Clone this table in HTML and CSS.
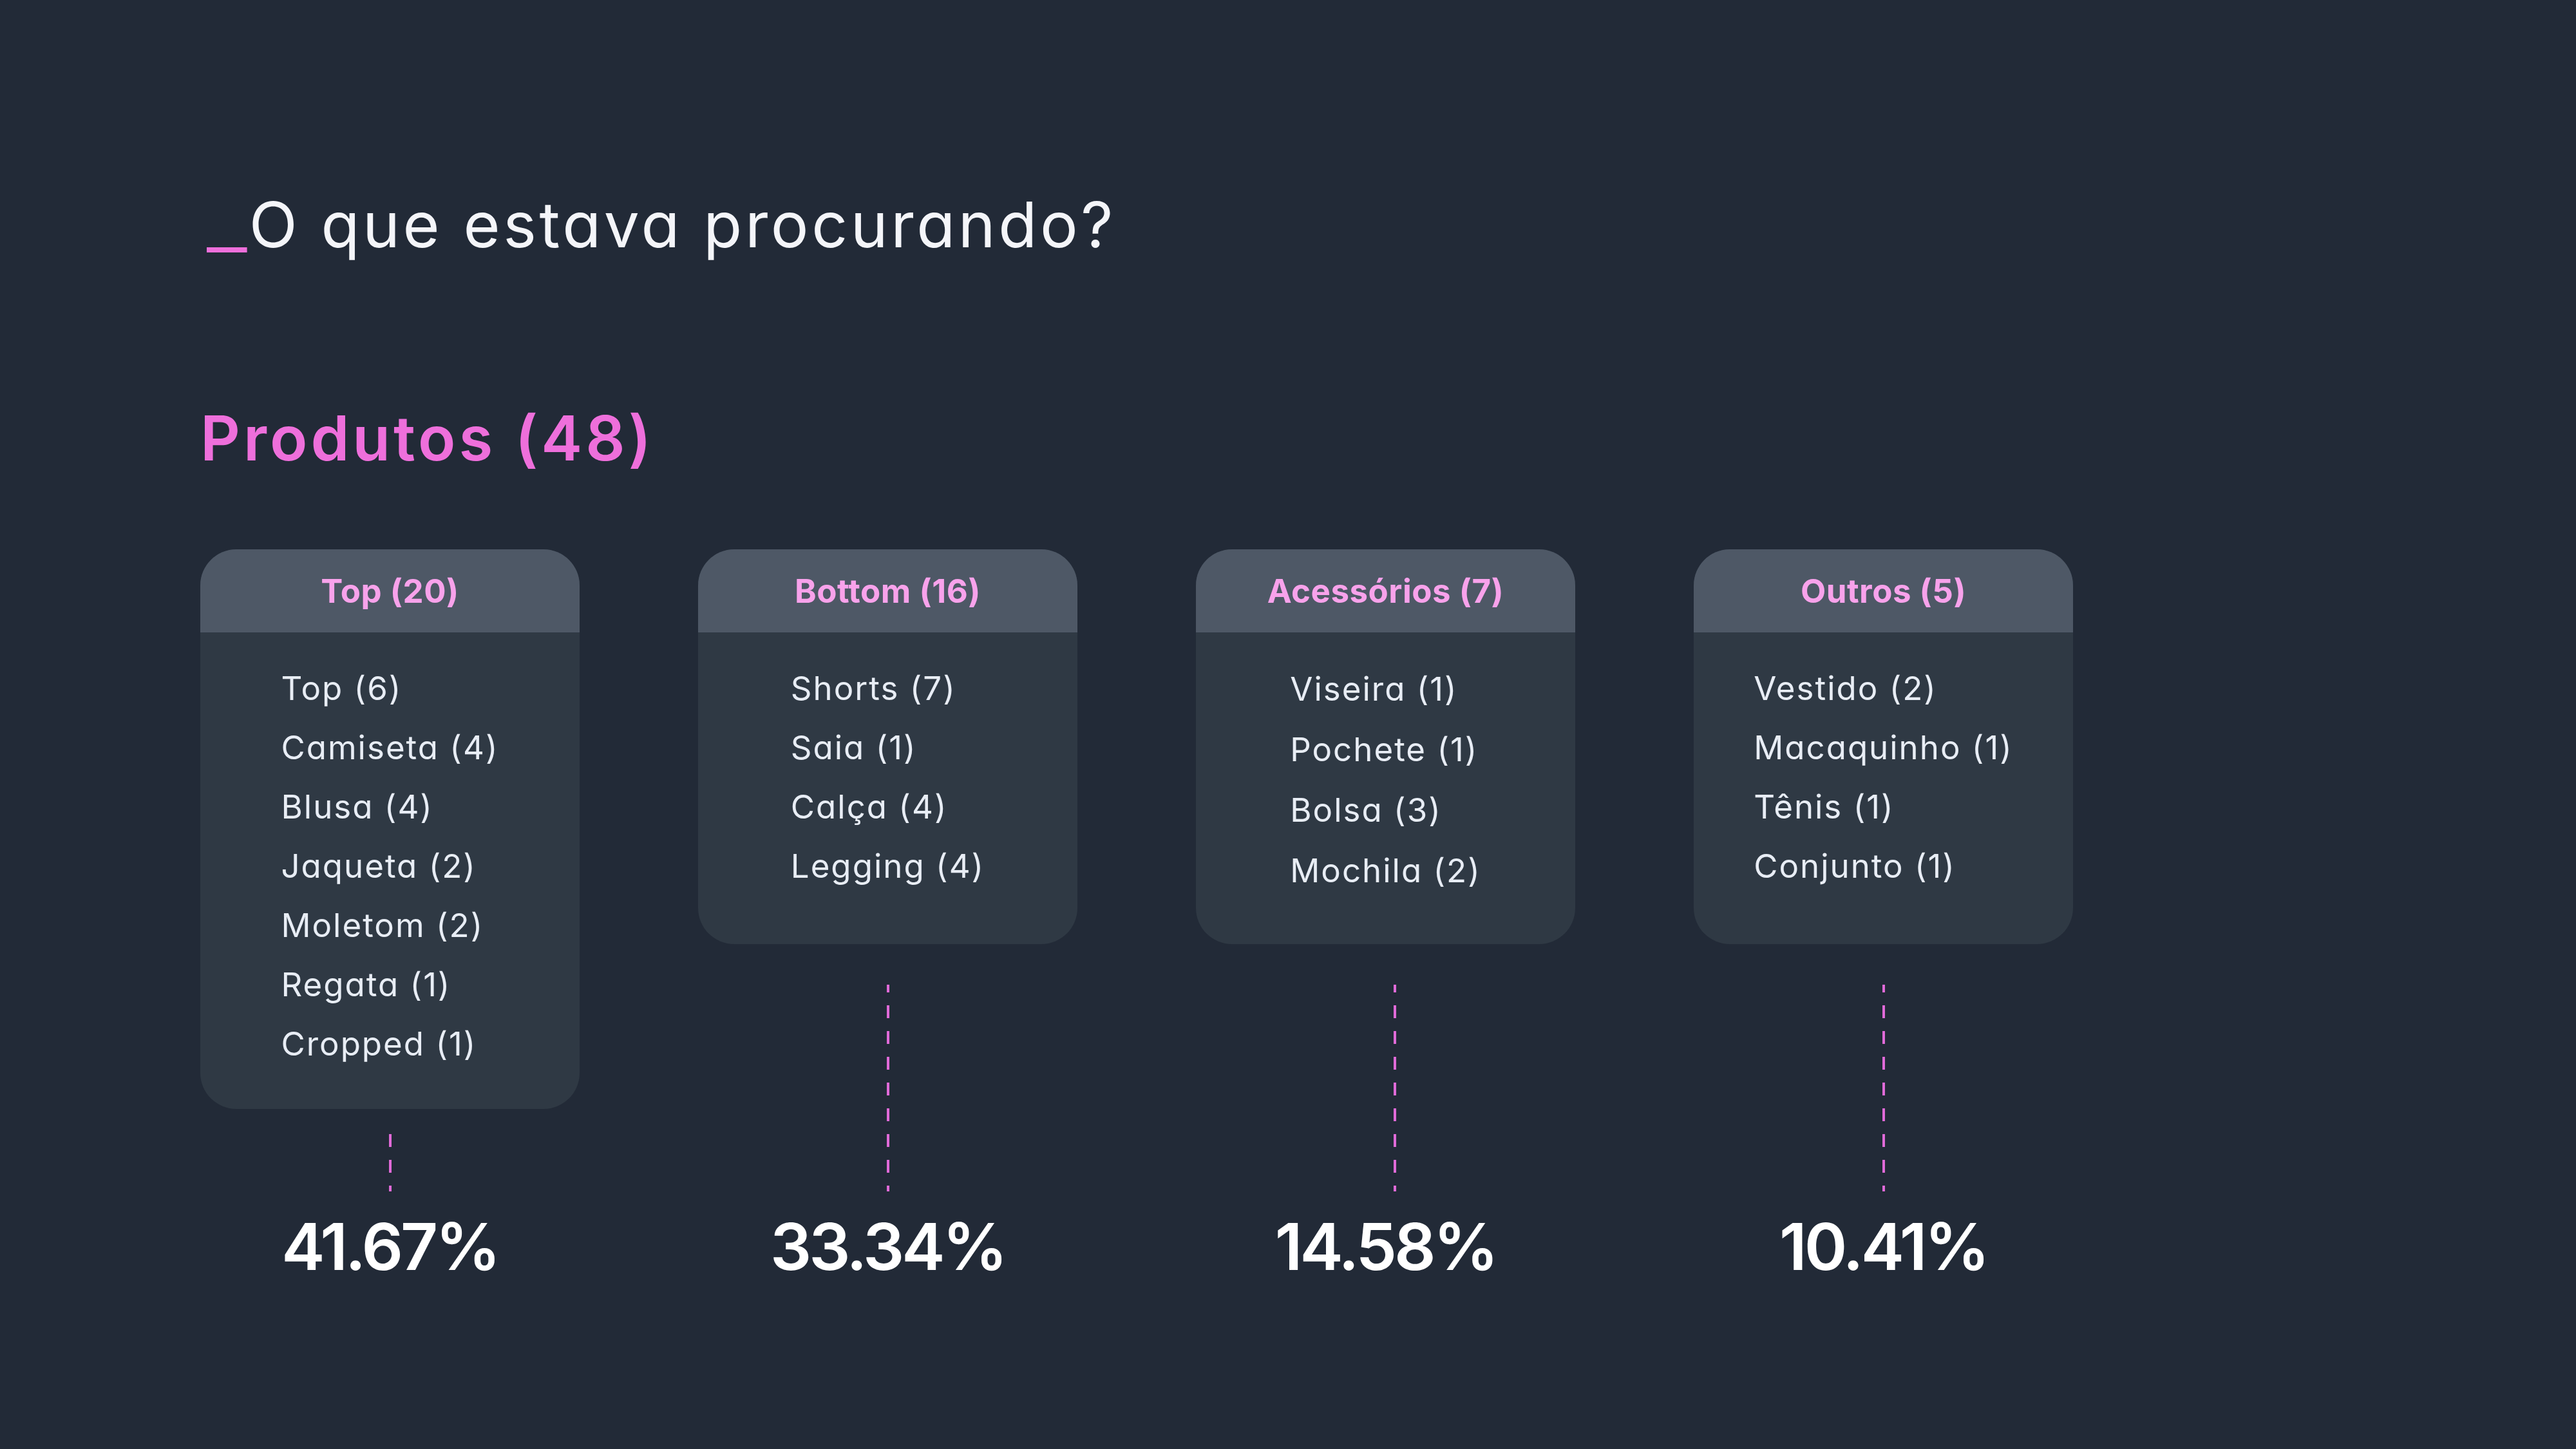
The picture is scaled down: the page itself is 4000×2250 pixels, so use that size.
FILE: index.html
```html
<!DOCTYPE html>
<html lang="pt-BR">
<head>
<meta charset="utf-8">
<title>O que estava procurando?</title>
<link rel="stylesheet" href="styles.css">
</head>
<body>
<main class="slide">
  <h1 class="title"><span class="title__mark">_</span>O que estava procurando?</h1>
  <h2 class="section">Produtos (48)</h2>
  <div class="categories">
    <section class="col col--tall">
      <div class="card">
        <h3 class="card__head">Top (20)</h3>
        <ul class="card__list">
          <li>Top (6)</li>
          <li>Camiseta (4)</li>
          <li>Blusa (4)</li>
          <li>Jaqueta (2)</li>
          <li>Moletom (2)</li>
          <li>Regata (1)</li>
          <li>Cropped (1)</li>
        </ul>
      </div>
      <div class="connector"></div>
      <p class="pct">41.67%</p>
    </section>
    <section class="col">
      <div class="card">
        <h3 class="card__head">Bottom (16)</h3>
        <ul class="card__list">
          <li>Shorts (7)</li>
          <li>Saia (1)</li>
          <li>Calça (4)</li>
          <li>Legging (4)</li>
        </ul>
      </div>
      <div class="connector"></div>
      <p class="pct">33.34%</p>
    </section>
    <section class="col">
      <div class="card">
        <h3 class="card__head">Acessórios (7)</h3>
        <ul class="card__list card__list--loose">
          <li>Viseira (1)</li>
          <li>Pochete (1)</li>
          <li>Bolsa (3)</li>
          <li>Mochila (2)</li>
        </ul>
      </div>
      <div class="connector connector--shifted"></div>
      <p class="pct">14.58%</p>
    </section>
    <section class="col">
      <div class="card">
        <h3 class="card__head">Outros (5)</h3>
        <ul class="card__list">
          <li>Vestido (2)</li>
          <li>Macaquinho (1)</li>
          <li>Tênis (1)</li>
          <li>Conjunto (1)</li>
        </ul>
      </div>
      <div class="connector"></div>
      <p class="pct">10.41%</p>
    </section>
  </div>
</main>
</body>
</html>
```

FILE: styles.css
```css
html, body {
  margin: 0;
  padding: 0;
  background: #222a37;
}

body {
  width: 4000px;
  height: 2250px;
  overflow: hidden;
  font-family: Inter, "Noto Sans", "DejaVu Sans", sans-serif;
  font-feature-settings: "cv11" 1;
}

.slide {
  box-sizing: border-box;
  height: 2250px;
  padding: 300px 0 0 311px;
}

.title {
  margin: 0;
  font-size: 98px;
  font-weight: 400;
  line-height: 1;
  letter-spacing: 4.6px;
  color: #f4f5f9;
  white-space: nowrap;
}

.title__mark {
  display: inline-block;
  margin-left: 10px;
  margin-right: 21px;
  color: #ee6fdb;
  letter-spacing: 0;
  transform: scaleX(1.4);
  transform-origin: left center;
}

.section {
  margin: 234px 0 0;
  font-size: 96px;
  font-weight: 600;
  line-height: 1;
  letter-spacing: 5px;
  color: #ee6fdb;
}

.categories {
  display: grid;
  grid-template-columns: repeat(4, 589px);
  column-gap: 184px;
  margin-top: 125px;
}

.col {
  display: flex;
  flex-direction: column;
}

.card {
  box-sizing: border-box;
  min-height: 613px;
  padding-bottom: 55px;
  background: #2f3944;
  border-radius: 56px;
  overflow: hidden;
}

.card__head {
  display: flex;
  align-items: center;
  justify-content: center;
  height: 129px;
  margin: 0;
  background: #4e5866;
  font-size: 51px;
  font-weight: 700;
  letter-spacing: 0.5px;
  color: #f8a2eb;
}

.card__list {
  width: max-content;
  margin: 0 auto;
  padding: 41px 0 0;
  list-style: none;
}

.card__list li {
  font-size: 51px;
  line-height: 92px;
  letter-spacing: 2px;
  color: #e8edf5;
}

.card__list--loose li {
  line-height: 94px;
}

.connector {
  flex: 1 0 98px;
  width: 4px;
  margin: 63px auto 35px;
  background: repeating-linear-gradient(to top, #e06ad8 0 9px, transparent 9px 29px, #e06ad8 29px 40px);
}

.connector--shifted {
  margin-left: 307px;
}

.col--tall .connector {
  margin-top: 30px;
}

.pct {
  margin: 0;
  text-align: center;
  font-size: 101px;
  font-weight: 600;
  line-height: 1;
  letter-spacing: -4px;
  color: #ffffff;
}
```
